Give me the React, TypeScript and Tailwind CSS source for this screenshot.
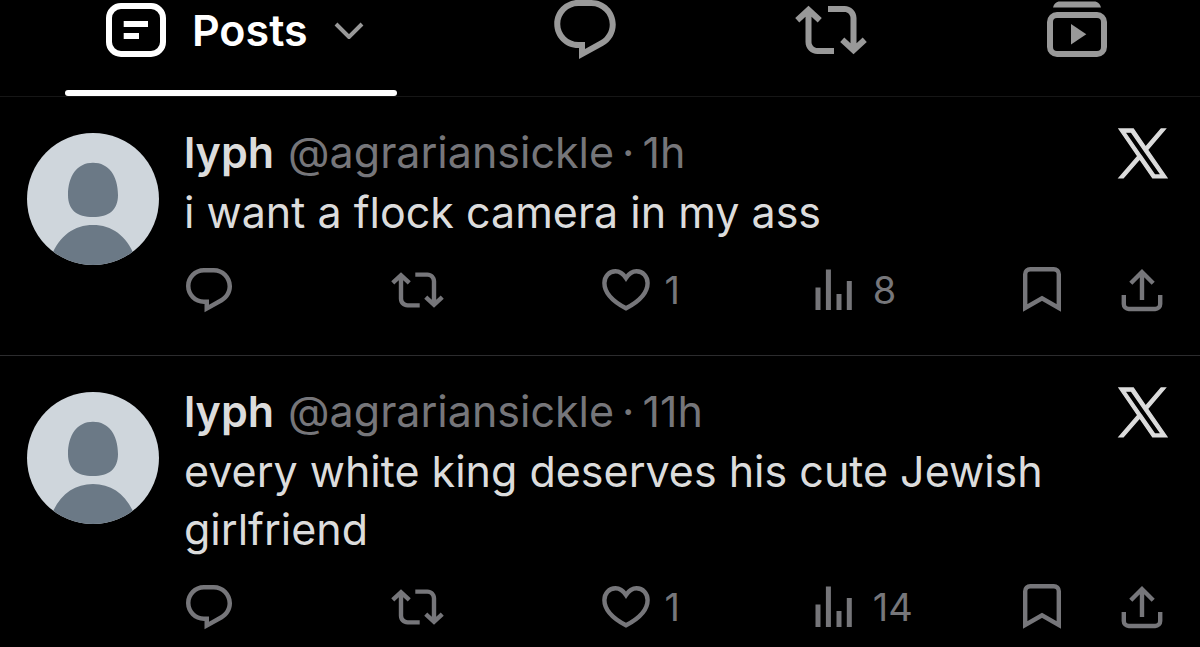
import type { ReactNode } from "react";

type Post = {
  id: number;
  name: string;
  handle: string;
  time: string;
  text: string;
  likes: number;
  views: number;
};

const posts: Post[] = [
  {
    id: 1,
    name: "lyph",
    handle: "@agrariansickle",
    time: "1h",
    text: "i want a flock camera in my ass",
    likes: 1,
    views: 8,
  },
  {
    id: 2,
    name: "lyph",
    handle: "@agrariansickle",
    time: "11h",
    text: "every white king deserves his cute Jewish girlfriend",
    likes: 1,
    views: 14,
  },
];

type IconProps = { className: string };

function PostsIcon() {
  return (
    <svg viewBox="0 0 60 60" className="h-[60px] w-[60px] shrink-0" fill="none" aria-hidden="true">
      <rect x="3" y="6" width="54" height="48" rx="12" stroke="currentColor" strokeWidth="6" />
      <path d="M17.7 24H42M17.7 36H33" stroke="currentColor" strokeWidth="6" />
    </svg>
  );
}

function ChevronIcon() {
  return (
    <svg viewBox="0 0 30 18" className="h-[18px] w-[30px] shrink-0 text-[#999]" fill="none" aria-hidden="true">
      <path d="M2 3L15 16L28 3" stroke="currentColor" strokeWidth="4" />
    </svg>
  );
}

function ReplyIcon({ className }: IconProps) {
  return (
    <svg viewBox="1.75 2 20.5 20" className={className} fill="currentColor" aria-hidden="true">
      <path d="M1.751 10c0-4.42 3.584-8 8.005-8h4.366c4.49 0 8.129 3.64 8.129 8.13 0 2.96-1.607 5.68-4.196 7.11l-8.054 4.46v-3.69h-.067c-4.49.1-8.183-3.51-8.183-8.01zm8.005-6c-3.317 0-6.005 2.69-6.005 6 0 3.37 2.77 6.08 6.138 6.01l.351-.01h1.761v2.3l5.087-2.81c1.951-1.08 3.163-3.13 3.163-5.36 0-3.39-2.744-6.13-6.129-6.13H9.756z" />
    </svg>
  );
}

function RepostIcon({ className }: IconProps) {
  return (
    <svg viewBox="0 2 24 20" className={className} fill="currentColor" aria-hidden="true">
      <path d="M4.5 3.88l4.432 4.14-1.364 1.46L5.5 7.55V16c0 1.1.896 2 2 2H13v2H7.5c-2.209 0-4-1.79-4-4V7.55L1.432 9.48.068 8.02 4.5 3.88zM16.5 6H11V4h5.5c2.209 0 4 1.79 4 4v8.45l2.068-1.93 1.364 1.46-4.432 4.14-4.432-4.14 1.364-1.46 2.068 1.93V8c0-1.1-.896-2-2-2z" />
    </svg>
  );
}

function MediaIcon() {
  return (
    <svg viewBox="0 0 60 60" className="h-[60px] w-[60px] shrink-0" fill="none" aria-hidden="true">
      <path d="M6 7.6C7 4 9 1.6 13 1.6H47C51 1.6 53 4 54 7.6Z" fill="currentColor" />
      <rect x="3" y="15" width="54" height="39" rx="7" stroke="currentColor" strokeWidth="6" />
      <path d="M24 24L39.3 34.2L24 44.4Z" fill="currentColor" />
    </svg>
  );
}

function HeartIcon() {
  return (
    <svg viewBox="0 0 48 42" className="h-[42px] w-[48px] shrink-0" fill="none" aria-hidden="true">
      <path
        d="M24 9C21 4.500 17.500 2.300 13.500 2.300C7 2.300 2.400 7.300 2.400 14C2.400 23.500 10 32 24 39.300C38 32 45.600 23.500 45.600 14C45.600 7.300 41 2.300 34.500 2.300C30.500 2.300 27 4.500 24 9Z"
        stroke="currentColor"
        strokeWidth="4.4"
      />
    </svg>
  );
}

function ViewsIcon() {
  return (
    <svg viewBox="0 0 37 42" className="h-[42px] w-[37px] shrink-0" fill="none" aria-hidden="true">
      <path d="M3 18.5V41M13.4 .5V41M24 25V41M34.3 12V41" stroke="currentColor" strokeWidth="5" />
    </svg>
  );
}

function BookmarkIcon() {
  return (
    <svg viewBox="0 0 38 46" className="h-[46px] w-[38px] shrink-0" fill="none" aria-hidden="true">
      <path d="M2.2 41V7.2A5 5 0 0 1 7.2 2.2H30.8A5 5 0 0 1 35.8 7.2V41L19 31.3Z" stroke="currentColor" strokeWidth="4.4" />
    </svg>
  );
}

function ShareIcon() {
  return (
    <svg viewBox="0 0 42 44" className="h-[44px] w-[42px] shrink-0" fill="none" aria-hidden="true">
      <path
        d="M2.8 27V36A5 5 0 0 0 7.8 41H34.2A5 5 0 0 0 39.2 36V27M21 32V4M9.8 15.2L21 4L32.2 15.2"
        stroke="currentColor"
        strokeWidth="4.4"
      />
    </svg>
  );
}

function XLogo() {
  return (
    <svg viewBox="0 0 1200 1227" className="h-[49px] w-[48px] overflow-visible" fill="currentColor" stroke="currentColor" strokeWidth="32" aria-hidden="true">
      <path d="M714.163 519.284L1160.89 0H1055.03L667.137 450.887L357.328 0H0L468.492 681.821L0 1226.37H105.866L515.491 750.218L842.672 1226.37H1200L714.137 519.284H714.163ZM569.165 687.828L521.697 619.934L144.011 79.6944H306.615L611.412 515.685L658.88 583.579L1055.08 1150.3H892.476L569.165 687.854V687.828Z" />
    </svg>
  );
}

function Avatar() {
  return (
    <svg viewBox="0 0 132 132" className="mt-[10px] h-[132px] w-[132px] shrink-0 rounded-full bg-[#cfd6dc]" role="img" aria-label="lyph">
      <path
        d="M66 29.7C82 29.7 91 43 91 62C91 77 82 84 66 84C50 84 41 77 41 62C41 43 50 29.7 66 29.7ZM24 124C32 103 47 92 66 92S100 103 108 124V132H24Z"
        fill="#6b7986"
      />
    </svg>
  );
}

function Action({ label, count, children }: { label: string; count?: number; children: ReactNode }) {
  return (
    <div className="flex-1">
      <button type="button" aria-label={label} className="flex items-center gap-[14px]">
        <span className="flex h-[50px] w-[50px] items-center justify-center">{children}</span>
        {count !== undefined && <span className="text-[38px] leading-[50px]">{count}</span>}
      </button>
    </div>
  );
}

function PostItem({ post }: { post: Post }) {
  return (
    <article className="flex gap-[25px] border-b border-[#2c2c2e] pt-[26px] pr-[33px] pb-[40px] pl-[27px] last:border-b-0 last:pb-4">
      <Avatar />
      <div className="min-w-0 flex-1">
        <div className="flex items-start justify-between">
          <div className="flex gap-[14px] text-[43px] leading-[58px]">
            <a href="#" className="font-semibold">{post.name}</a>
            <div className="flex gap-2 text-[#76767a]">
              <span>{post.handle}</span>
              <span>·</span>
              <span>{post.time}</span>
            </div>
          </div>
          <a href="#" aria-label="X" className="mt-[6px]">
            <XLogo />
          </a>
        </div>
        <p className="mt-[2px] text-[43px] leading-[58px]">{post.text}</p>
        <div className="mt-[24px] flex text-[#76767a]">
          <Action label="Reply">
            <ReplyIcon className="h-[45px] w-[46px] shrink-0" />
          </Action>
          <Action label="Repost">
            <RepostIcon className="h-[44px] w-[53px] shrink-0" />
          </Action>
          <Action label="Like" count={post.likes}>
            <HeartIcon />
          </Action>
          <Action label="Views" count={post.views}>
            <ViewsIcon />
          </Action>
          <div className="flex gap-[50px]">
            <button type="button" aria-label="Bookmark" className="flex h-[50px] w-[50px] items-center justify-center">
              <BookmarkIcon />
            </button>
            <button type="button" aria-label="Share" className="flex h-[50px] w-[50px] items-center justify-center">
              <ShareIcon />
            </button>
          </div>
        </div>
      </div>
    </article>
  );
}

export default function App() {
  return (
    <main className="min-h-screen bg-black font-['Inter',sans-serif] text-[#dcdcdc]">
      <nav className="grid grid-cols-[15fr_8fr_8fr_8fr] border-b border-[#161616] text-[#999]">
        <button type="button" className="flex flex-col items-center text-white">
          <span>
            <span className="flex h-[90px] items-center gap-[26px] pr-[33px] pb-[30px] pl-[41px]">
              <PostsIcon />
              <span className="text-[43px] leading-[60px] font-semibold">Posts</span>
              <ChevronIcon />
            </span>
            <span className="block h-[6px] rounded-full bg-white" />
          </span>
        </button>
        <button type="button" aria-label="Replies" className="flex justify-center">
          <ReplyIcon className="h-[60px] w-[62px]" />
        </button>
        <button type="button" aria-label="Reposts" className="flex justify-center">
          <RepostIcon className="h-[60px] w-[72px]" />
        </button>
        <button type="button" aria-label="Media" className="flex justify-center">
          <MediaIcon />
        </button>
      </nav>
      {posts.map((post) => (
        <PostItem key={post.id} post={post} />
      ))}
    </main>
  );
}
